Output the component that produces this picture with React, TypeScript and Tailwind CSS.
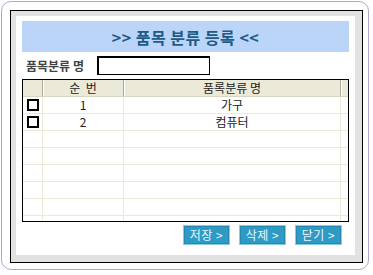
import React from "react";

const rows: { no: string; name: string }[] = [
  { no: "1", name: "가구" },
  { no: "2", name: "컴퓨터" },
  { no: "", name: "" },
  { no: "", name: "" },
  { no: "", name: "" },
  { no: "", name: "" },
  { no: "", name: "" },
  { no: "", name: "" },
];

function Btn({ label }: { label: string }) {
  return (
    <div className="w-[47px] h-[20px] border border-[#8ccde6] bg-[#2f9ac4] flex items-center justify-center shadow-[inset_0_0_0_1px_#2687b0]">
      <span className="text-[12px] leading-[14px] text-[#e6f7ff] tracking-[0.5px]">
        {label}
      </span>
    </div>
  );
}

export default function App() {
  return (
    <div className="w-[373px] h-[275px] bg-white p-[1px] font-['Noto_Sans_CJK_KR','Noto_Sans',sans-serif]">
      <div className="w-[368px] h-[269px] rounded-[10px] border border-[#b4a2d6] p-[8px]">
        <div className="w-[353px] h-[253px] border border-black bg-[#e2e2e2] pt-[5px] pl-[5px]">
          <div className="w-[339px] h-[239px] bg-white pt-[5px] pl-[6px]">
            {/* title */}
            <div className="w-[327px] h-[31px] bg-[#bad5f8] flex items-center justify-center">
              <span className="text-[16px] leading-[20px] font-bold text-[#1f5b87] tracking-[0.5px]">
                &gt;&gt; 품목 분류 등록 &lt;&lt;
              </span>
            </div>
            {/* label row */}
            <div className="mt-[4px] h-[19px] flex items-center">
              <span className="ml-[4px] w-[71px] text-[12px] leading-[14px] font-bold text-[#444]">
                품목분류 명
              </span>
              <div className="w-[113px] h-[19px] border border-black border-t-[2px] border-l-[2px] bg-white" />
            </div>
            {/* table */}
            <div className="mt-[4px] w-[327px] h-[143px] border border-black bg-white overflow-hidden">
              <div className="h-[17px] flex bg-[#ebe9d8] border-b border-[#d8d5c3]">
                <div className="w-[20px] h-full border-r border-[#aca899]" />
                <div className="w-[81px] h-full border-r border-[#aca899] shadow-[inset_1px_0_0_#fff] flex items-center justify-center text-[12px] leading-[14px] text-[#222] whitespace-pre">
                  순  번
                </div>
                <div className="w-[217px] h-full border-r border-[#aca899] shadow-[inset_1px_0_0_#fff] flex items-center justify-center text-[12px] leading-[14px] text-[#222]">
                  품록분류 명
                </div>
                <div className="w-[7px] h-full shadow-[inset_1px_0_0_#fff]" />
              </div>
              <div className="h-[124px] overflow-hidden">
                {rows.map((r, i) => (
                  <div key={i} className="h-[17px] flex border-b border-[#ece9d8]">
                    <div className="w-[20px] h-full border-r border-[#ece9d8] flex items-center pl-[4px]">
                      {i < 2 && (
                        <div className="w-[12px] h-[12px] border-2 border-black bg-white" />
                      )}
                    </div>
                    <div className="w-[81px] h-full border-r border-[#ece9d8] flex items-center justify-center text-[12px] leading-[14px] text-[#222]">
                      {r.no}
                    </div>
                    <div className="w-[217px] h-full border-r border-[#ece9d8] flex items-center justify-center text-[12px] leading-[14px] text-[#222]">
                      {r.name}
                    </div>
                    <div className="w-[7px] h-full" />
                  </div>
                ))}
              </div>
            </div>
            {/* buttons */}
            <div className="mt-[3px] w-[327px] pr-[7px] flex justify-end gap-[9px]">
              <Btn label="저장 >" />
              <Btn label="삭제 >" />
              <Btn label="닫기 >" />
            </div>
          </div>
        </div>
      </div>
    </div>
  );
}
